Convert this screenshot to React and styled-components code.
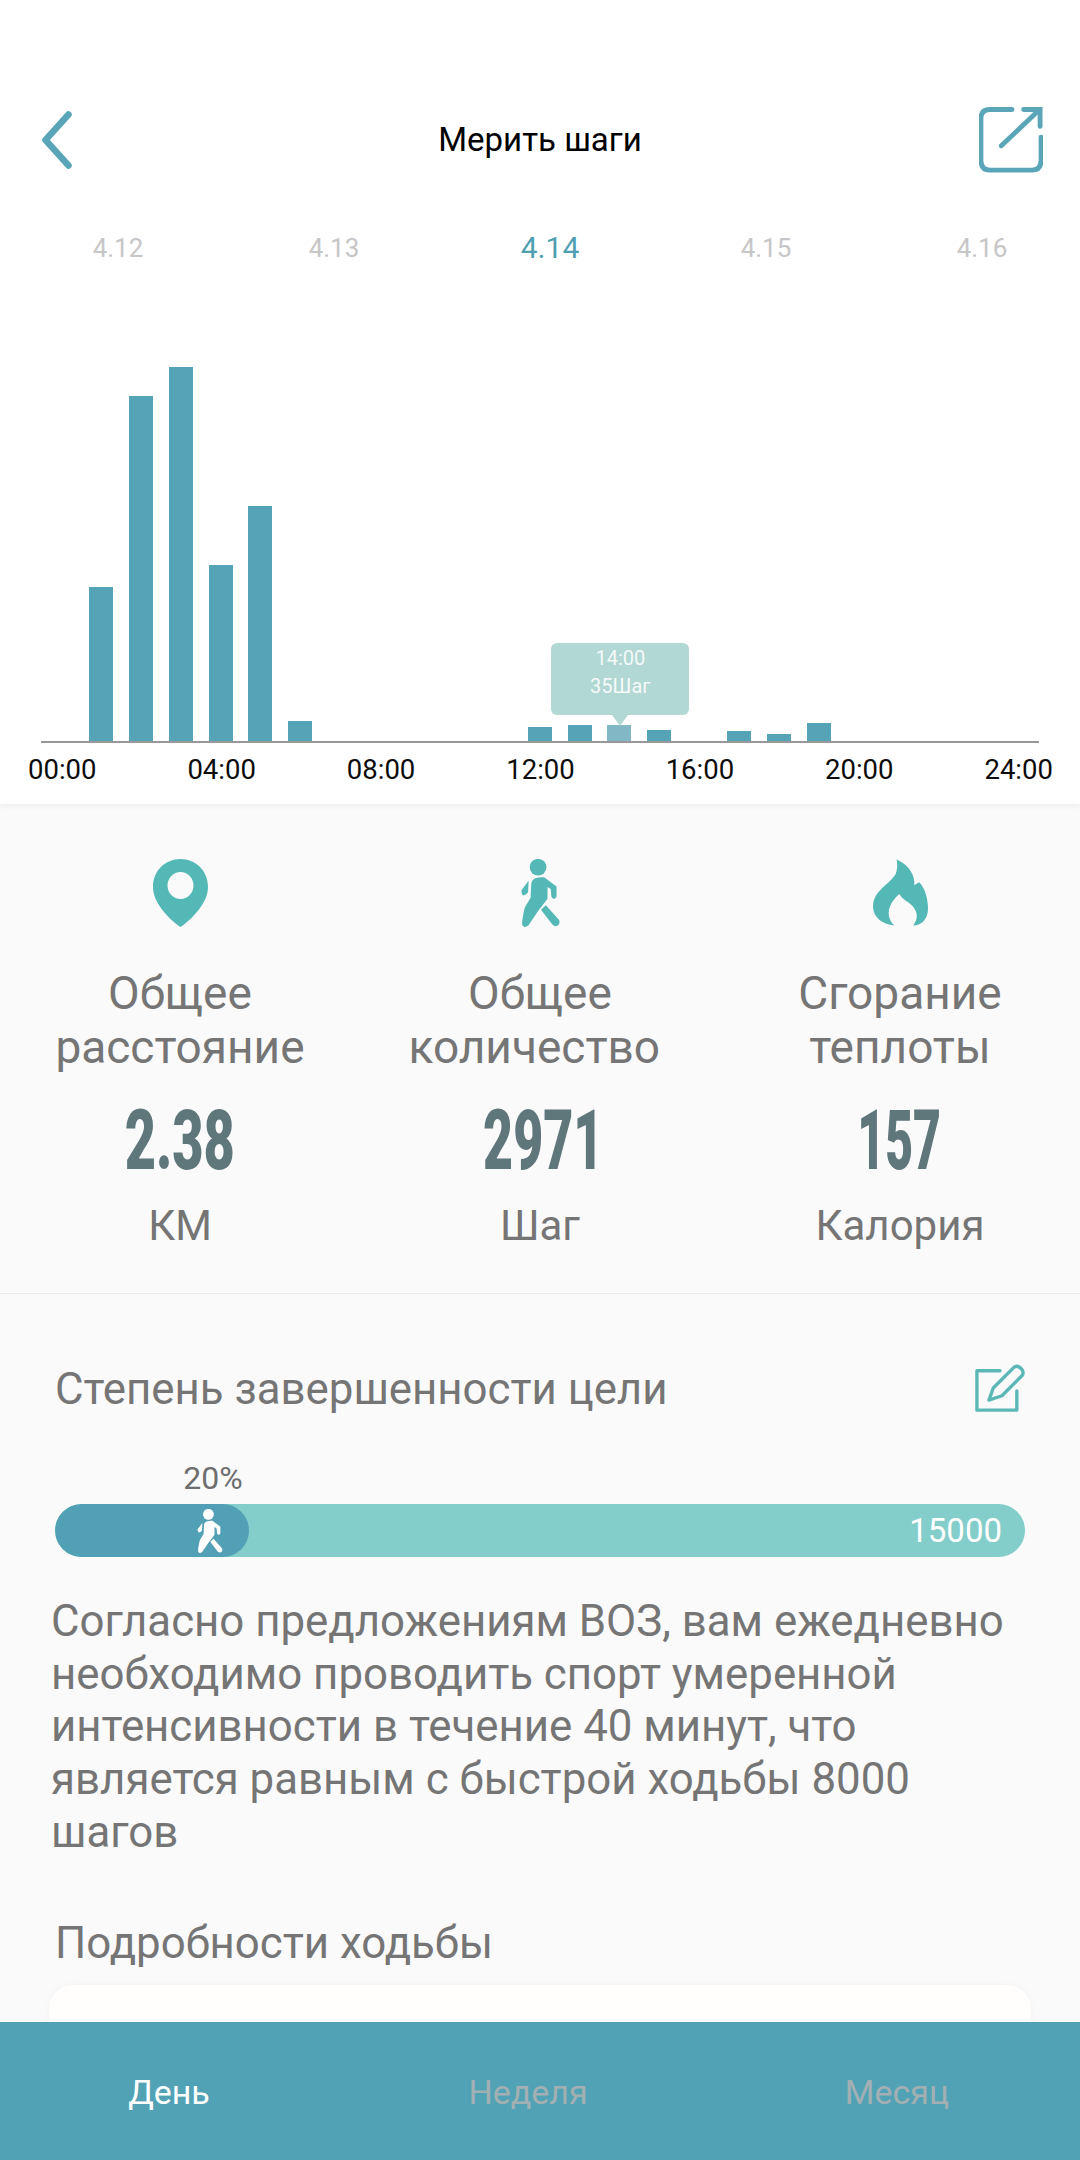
import React from "react";
import styled, { createGlobalStyle } from "styled-components";

const Global = createGlobalStyle`
  html, body { margin: 0; padding: 0; background: #fff; }
  * { box-sizing: border-box; }
`;

const Page = styled.div`
  width: 1080px;
  height: 2160px;
  display: flex;
  flex-direction: column;
  overflow: hidden;
  background: #fafafb;
  font-family: Roboto, "Noto Sans", sans-serif;
  color: #757575;
`;

const Scroll = styled.main`
  flex: 1;
  min-height: 0;
  overflow: hidden;
`;

const Top = styled.section`
  background: #fff;
  height: 804px;
  padding-top: 100px;
  box-shadow: 0 2px 5px rgba(0, 0, 0, 0.05);
  position: relative;
`;

const Header = styled.header`
  display: grid;
  grid-template-columns: 1fr auto 1fr;
  align-items: center;
  height: 80px;
  padding: 0 37px;
`;

const LeftSlot = styled.div`
  justify-self: start;
  display: flex;
  padding-left: 5px;
`;

const Title = styled.h1`
  margin: -2px 0 0;
  font-size: 33px;
  font-weight: 400;
  color: #000;
`;

const RightSlot = styled.div`
  justify-self: end;
  display: flex;
`;

const Dates = styled.div`
  display: grid;
  grid-template-columns: repeat(5, 216px);
  padding-left: 10px;
  margin-top: 50px;
  height: 36px;
  align-items: center;
  justify-items: center;
`;

const DateItem = styled.span`
  font-size: ${(p) => (p.$active ? "30px" : "26px")};
  color: ${(p) => (p.$active ? "#4f9fb3" : "#c6c6c6")};
  line-height: 36px;
`;

const Chart = styled.div`
  margin-left: 41px;
  width: 998px;
  height: 477px;
  display: flex;
  align-items: flex-end;
  border-bottom: 2px solid #989898;
`;

const Slot = styled.div`
  position: relative;
  width: 39.9px;
  display: flex;
  justify-content: center;
  align-items: flex-end;
`;

const Bar = styled.div`
  width: 24px;
  background: ${(p) => (p.$selected ? "#82b8c5" : "#55a3b6")};
`;

const Tip = styled.div`
  position: absolute;
  left: calc(50% + 1px);
  transform: translateX(-50%);
  bottom: 26px;
  width: 138px;
  height: 72px;
  border-radius: 6px;
  background: #b2d8d3;
  color: rgba(255, 255, 255, 0.88);
  font-size: 20px;
  line-height: 28px;
  text-align: center;
  padding-top: 1px;
  display: flex;
  flex-direction: column;
  &::after {
    content: "";
    position: absolute;
    left: 50%;
    top: 100%;
    margin-left: -8px;
    border: 8px solid transparent;
    border-top: 11px solid #b2d8d3;
    border-bottom: 0;
  }
`;

const Axis = styled.div`
  display: flex;
  justify-content: space-between;
  padding: 0 27px 0 28px;
  font-size: 27.5px;
  line-height: 54px;
  color: #0c0c0c;
`;

const Stats = styled.section`
  display: grid;
  grid-template-columns: repeat(3, 360px);
  padding-top: 55px;
  height: 490px;
  border-bottom: 1px solid #ececec;
`;

const Stat = styled.div`
  display: flex;
  flex-direction: column;
  align-items: center;
  text-align: center;
`;

const IconBox = styled.div`
  height: 68px;
  margin-bottom: 39px;
  display: flex;
  justify-content: center;
`;

const StatLabel = styled.div`
  font-size: 46px;
  line-height: 54px;
  white-space: pre;
`;

const StatValue = styled.div`
  font-size: 83px;
  font-weight: 900;
  line-height: 84px;
  margin-top: 25px;
  color: #5f767b;
  transform: translateX(${(p) => p.$shift}px) scaleX(${(p) => p.$squeeze});
`;

const StatUnit = styled.div`
  font-size: 42px;
  line-height: 54px;
  margin-top: 16px;
`;

const Goal = styled.section`
  padding: 68px 55px 0;
`;

const GoalHead = styled.div`
  display: flex;
  justify-content: space-between;
  align-items: center;
  height: 54px;
`;

const Heading = styled.h2`
  margin: 0;
  font-size: 43.8px;
  font-weight: 400;
  line-height: 54px;
`;

const Percent = styled.div`
  margin-top: 42px;
  width: 316px;
  text-align: center;
  font-size: 32px;
  line-height: 40px;
  color: #6e6e6e;
`;

const Track = styled.div`
  margin-top: 6px;
  height: 53px;
  border-radius: 27px;
  background: #83cdcb;
  display: flex;
  justify-content: space-between;
  align-items: center;
  overflow: hidden;
`;

const Fill = styled.div`
  flex: none;
  height: 100%;
  border-radius: 27px;
  background: #52a0b6;
  display: flex;
  justify-content: flex-end;
  align-items: center;
  padding-right: 26px;
`;

const Target = styled.span`
  font-size: 33px;
  color: #fff;
  margin-right: 23px;
`;

const Advice = styled.p`
  margin: 38px 0 0 -4px;
  width: 985px;
  font-size: 43.8px;
  line-height: 52.7px;
`;

const Details = styled.div`
  margin-top: 57px;
`;

const Card = styled.div`
  margin: 15px -6px 0;
  height: 240px;
  border-radius: 24px;
  background: #fffefd;
  box-shadow: 0 0 10px rgba(0, 0, 0, 0.03);
`;

const Nav = styled.nav`
  height: 138px;
  flex: none;
  padding-top: 2px;
  background: #52a2b6;
  display: grid;
  grid-template-columns: 338px 380px 358px;
  align-items: center;
  justify-items: center;
`;

const NavItem = styled.span`
  font-size: 34px;
  color: ${(p) => (p.$active ? "#fff" : "#a3b0b3")};
`;

const ACCENT = "#53b8b6";
const STROKE = "#5aa6b8";

const BackIcon = () => (
  <svg width="30" height="58" viewBox="0 0 30 58" fill="none">
    <path d="M26.5 3.5 L3.5 29 L26.5 54.5" stroke={STROKE} strokeWidth="6.5" strokeLinecap="round" strokeLinejoin="round" />
  </svg>
);

const ShareIcon = () => (
  <svg width="64" height="66" viewBox="9 5 66 68" fill="none" stroke={STROKE} strokeWidth="5" strokeLinecap="round">
    <path d="M43 7.5 H20 Q11 7.5 11 17 V60 Q11 70 20 70 H64 Q73 70 73 60 V36" />
    <path d="M32 45 L71 8" />
    <path d="M55 7.5 H72 V25" />
  </svg>
);

const PinIcon = () => (
  <svg width="55" height="68" viewBox="0 0 55 68">
    <path
      fill={ACCENT}
      fillRule="evenodd"
      d="M27.5 0 C12 0 0 12 0 28 C0 44 16 60 27.5 68 C39 60 55 44 55 28 C55 12 43 0 27.5 0 Z M27.5 13 A13 13.5 0 1 1 27.5 40 A13 13.5 0 1 1 27.5 13 Z"
    />
  </svg>
);

const WalkerIcon = ({ color, width, height }) => (
  <svg width={width} height={height} viewBox="9 8.5 41 70" fill={color}>
    <circle cx="27" cy="17" r="8.6" />
    <path d="M17.3 30.7 L10 40.7 Q10 46 12 46 Q15 45.5 16.7 42.7 Z" />
    <path d="M24 28.3 Q28 27 33.3 27.3 L46 36.7 V47 Q45 49.5 43.3 49.3 Q41 49 40.7 47 L40 39.3 L36.7 37.3 V49.3 L27 62 L17 77 Q13 80 11 77 Q9.5 75 13.3 58.3 L19.3 48.3 L20 33.3 Q20.5 30 24 28.3 Z" />
    <path d="M35 56 L30 60.7 L41.7 76 Q45 79 48 76.5 Q50 74 48.5 71 Z" />
  </svg>
);

const FlameIcon = () => (
  <svg width="55" height="68" viewBox="6 10 56 68">
    <path
      fill={ACCENT}
      d="M30 10 C44 16 49 28 48 36 L53 33 C60 40 62 52 62 60 C62 70 56 77 47 77 C52 70 52 64 46 57 C41 52 35 50 33 45 C29 48 22 56 22 64 C22 70 25 75 28 77 C15 76 6 68 6 58 C6 42 22 36 29 25 C31 20 31 14 30 10 Z"
    />
  </svg>
);

const EditIcon = () => (
  <svg width="50" height="50" viewBox="9 5 52 52" fill="none" stroke="#5cb8b6" strokeWidth="3.5" strokeLinejoin="round" strokeLinecap="round">
    <path d="M35 12 H11 V53 H52.5 V33" />
    <path d="M23.5 42.5 L28 30 L50 8 Q54 6 58 11 Q60 14 58 17 L37 38 Z" />
  </svg>
);

// Bar heights in pixels, one per hour of the day.
const hours = [0, 154, 345, 374, 176, 235, 20, 0, 0, 0, 0, 0, 14, 16, 16, 11, 0, 10, 7, 18, 0, 0, 0, 0];
const selectedHour = 14;

const dates = ["4.12", "4.13", "4.14", "4.15", "4.16"];
const axisLabels = ["00:00", "04:00", "08:00", "12:00", "16:00", "20:00", "24:00"];

const stats = [
  { icon: <PinIcon />, label: "Общее\nрасстояние", value: "2.38", squeeze: 0.65, shift: 0, unit: "КМ" },
  { icon: <WalkerIcon color={ACCENT} width={41} height={68} />, label: "Общее\nколичество\u00A0", value: "2971", squeeze: 0.625, shift: 3, unit: "Шаг" },
  { icon: <FlameIcon />, label: "Сгорание\nтеплоты", value: "157", squeeze: 0.58, shift: -1, unit: "Калория" },
];

export default function App() {
  return (
    <Page>
      <Global />
      <Scroll>
        <Top>
          <Header>
            <LeftSlot>
              <BackIcon />
            </LeftSlot>
            <Title>Мерить шаги</Title>
            <RightSlot>
              <ShareIcon />
            </RightSlot>
          </Header>
          <Dates>
            {dates.map((d) => (
              <DateItem key={d} $active={d === "4.14"}>
                {d}
              </DateItem>
            ))}
          </Dates>
          <Chart>
            {hours.map((h, i) => (
              <Slot key={i}>
                <Bar $selected={i === selectedHour} style={{ height: h }} />
                {i === selectedHour && (
                  <Tip>
                    <span>14:00</span>
                    <span>35Шаг</span>
                  </Tip>
                )}
              </Slot>
            ))}
          </Chart>
          <Axis>
            {axisLabels.map((t) => (
              <span key={t}>{t}</span>
            ))}
          </Axis>
        </Top>
        <Stats>
          {stats.map((s) => (
            <Stat key={s.unit}>
              <IconBox>{s.icon}</IconBox>
              <StatLabel>{s.label}</StatLabel>
              <StatValue $squeeze={s.squeeze} $shift={s.shift}>{s.value}</StatValue>
              <StatUnit>{s.unit}</StatUnit>
            </Stat>
          ))}
        </Stats>
        <Goal>
          <GoalHead>
            <Heading>Степень завершенности цели</Heading>
            <EditIcon />
          </GoalHead>
          <Percent>20%</Percent>
          <Track>
            <Fill style={{ width: "20%" }}>
              <WalkerIcon color="#fff" width={26} height={44} />
            </Fill>
            <Target>15000</Target>
          </Track>
          <Advice>
            Согласно предложениям ВОЗ, вам ежедневно необходимо проводить спорт умеренной интенсивности в течение 40 минут, что является равным с быстрой ходьбы 8000 шагов
          </Advice>
          <Details>
            <Heading>Подробности ходьбы</Heading>
            <Card />
          </Details>
        </Goal>
      </Scroll>
      <Nav>
        <NavItem $active>День</NavItem>
        <NavItem>Неделя</NavItem>
        <NavItem>Месяц</NavItem>
      </Nav>
    </Page>
  );
}
